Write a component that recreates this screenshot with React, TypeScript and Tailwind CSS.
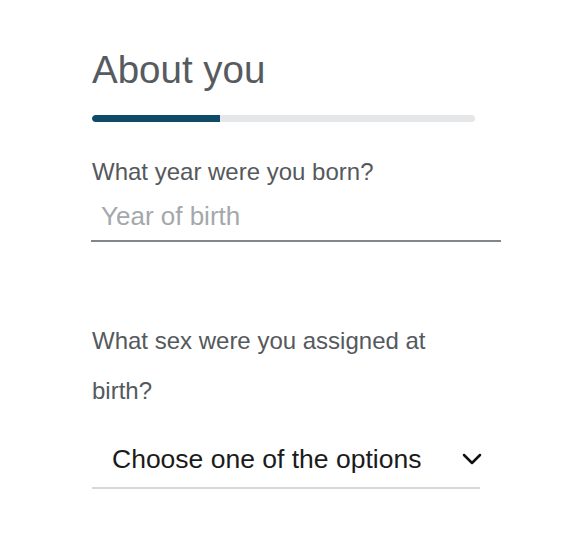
export default function App() {
  return (
    <div
      className="min-h-[548px] w-[566px] bg-white pl-[91px] pt-[48px]"
      style={{ fontFamily: '"Liberation Sans", Arial, sans-serif' }}
    >
      <h1 className="text-[38.5px] leading-[44px] text-[#565b5f] pl-[1px]">About you</h1>

      <div className="mt-[23px] ml-[1px] h-[7px] w-[383px] rounded-full bg-[#e4e6e7] overflow-hidden">
        <div className="h-full w-[128px] rounded-l-full bg-[#0f4a66]" />
      </div>

      <label className="block mt-[36px] pl-[1px] text-[24px] leading-[28px] text-[#55595d]">
        What year were you born?
      </label>
      <input
        type="text"
        placeholder="Year of birth"
        className="block w-[410px] pl-[10px] pt-[15px] pb-[9px] text-[26px] leading-[30px] text-[#333] placeholder:text-[#a4a8ab] border-b-2 border-[#80868a] outline-none bg-transparent"
      />

      <label className="block mt-[74px] w-[380px] pl-[1px] text-[24px] leading-[50px] text-[#55595d]">
        What sex were you assigned at birth?
      </label>
      <div className="mt-[27px] ml-[1px] flex w-[388px] items-center justify-between border-b-2 border-[#d5d7d8] pb-[12px] pl-[20px]">
        <span className="text-[26.5px] leading-[32px] text-[#1b1b1b]">Choose one of the options</span>
        <svg width="20" height="12" viewBox="0 0 20 12" className="mr-[-2px]">
          <polyline points="2,2 10,10 18,2" fill="none" stroke="#111" strokeWidth="2.5" strokeLinecap="round" strokeLinejoin="round" />
        </svg>
      </div>
    </div>
  );
}
